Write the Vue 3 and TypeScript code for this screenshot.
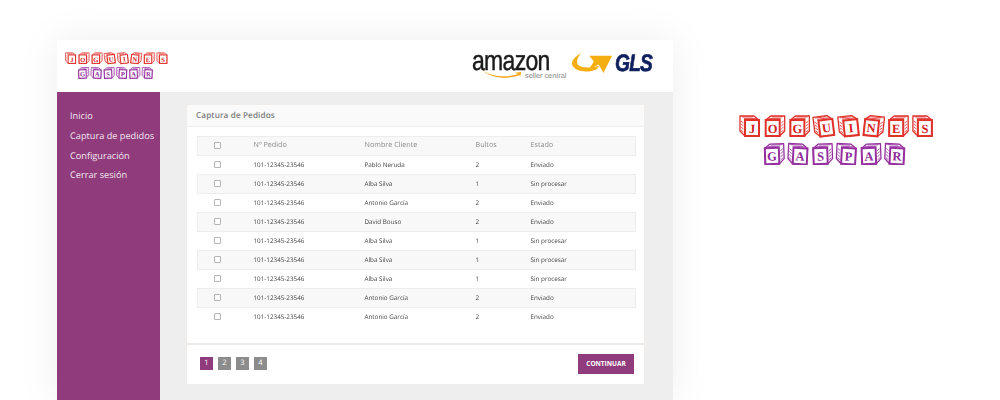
<template>
  <div class="page">
    <div class="window">
      <header class="topbar">
        <svg class="brand-small" viewBox="0 0 195 50" aria-label="Joguines Gaspar">
          <g v-for="b in blocks" :key="b.x + '-' + b.y" :transform="`translate(${b.x} ${b.y}) rotate(${b.r} 11 11)`" :class="b.y ? 'violet' : 'red'">
            <g :transform="b.flip ? 'matrix(-1 0 0 1 22 0)' : undefined">
              <path class="cube" d="M2 5 L7 1 H21 V16 L16 21 H2 Z" />
              <path class="hatch" d="M5 3.5 H17 M8 2 H19 M17.5 8 L20 6 M17.5 11 L20 9 M17.5 14 L20 12 M17.5 17 L20 15" />
              <rect class="face" x="2" y="5" width="14" height="16" />
            </g>
            <text :x="b.flip ? 13 : 9" y="17.5" text-anchor="middle">{{ b.l }}</text>
          </g>
        </svg>
        <div class="partners">
          <div class="amazon">
            <span class="amazon-word">amazon</span>
            <svg class="amazon-smile" viewBox="0 0 44 12" preserveAspectRatio="none">
              <path d="M1 1 C11 9 27 11 39 5 L40 7 C27 13 10 11 1 1 Z" fill="#f7a51c" />
              <path d="M35 3.5 L42 2.5 L41 9 C40.5 6.5 39 5 35 3.5 Z" fill="#f7a51c" />
            </svg>
            <span class="amazon-sub">seller central</span>
          </div>
          <div class="gls">
            <svg class="gls-arrow" viewBox="0 0 44 24">
              <path d="M11 1 C3 5 -1 11 2 15 C6 21 18 22 27 18 L30 14 C22 17 10 17 7 13 C5 9 8 4 11 1 Z" fill="#f5ae10" />
              <path d="M19 4 H43 L34 22 L29 13 L18 19 L24 10 Z" fill="#f5ae10" />
            </svg>
            <span class="gls-word">GLS</span>
          </div>
        </div>
      </header>
      <div class="body">
        <nav class="sidebar">
          <a v-for="item in menu" :key="item">{{ item }}</a>
        </nav>
        <main class="content">
          <section class="card">
            <h2 class="card-title">Captura de Pedidos</h2>
            <div class="card-body">
              <table>
                <thead>
                  <tr>
                    <th class="check"><span class="box"></span></th>
                    <th>Nº Pedido</th>
                    <th>Nombre Cliente</th>
                    <th>Bultos</th>
                    <th>Estado</th>
                  </tr>
                </thead>
                <tbody>
                  <tr v-for="(o, i) in orders" :key="i">
                    <td class="check"><span class="box"></span></td>
                    <td>101-12345-23546</td>
                    <td>{{ o.name }}</td>
                    <td>{{ o.count }}</td>
                    <td>{{ o.status }}</td>
                  </tr>
                </tbody>
              </table>
            </div>
            <footer class="card-footer">
              <div class="pages">
                <span v-for="p in 4" :key="p" class="page-num" :class="{ active: p === 1 }">{{ p }}</span>
              </div>
              <button class="next">CONTINUAR</button>
            </footer>
          </section>
        </main>
      </div>
    </div>
    <aside class="brand-side">
      <svg class="brand-large" viewBox="0 0 195 50" aria-label="Joguines Gaspar">
        <g v-for="b in blocks" :key="b.x + '-' + b.y" :transform="`translate(${b.x} ${b.y}) rotate(${b.r} 11 11)`" :class="b.y ? 'violet' : 'red'">
          <g :transform="b.flip ? 'matrix(-1 0 0 1 22 0)' : undefined">
            <path class="cube" d="M2 5 L7 1 H21 V16 L16 21 H2 Z" />
            <path class="hatch" d="M5 3.5 H17 M8 2 H19 M17.5 8 L20 6 M17.5 11 L20 9 M17.5 14 L20 12 M17.5 17 L20 15" />
            <rect class="face" x="2" y="5" width="14" height="16" />
          </g>
          <text :x="b.flip ? 13 : 9" y="17.5" text-anchor="middle">{{ b.l }}</text>
        </g>
      </svg>
    </aside>
  </div>
</template>

<script setup lang="ts">
interface Order {
  name: string
  count: number
  status: string
}

const menu = ['Inicio', 'Captura de pedidos', 'Configuración', 'Cerrar sesión']

const orders: Order[] = [
  { name: 'Pablo Neruda', count: 2, status: 'Enviado' },
  { name: 'Alba Silva', count: 1, status: 'Sin procesar' },
  { name: 'Antonio García', count: 2, status: 'Enviado' },
  { name: 'David Bouso', count: 2, status: 'Enviado' },
  { name: 'Alba Silva', count: 1, status: 'Sin procesar' },
  { name: 'Alba Silva', count: 1, status: 'Sin procesar' },
  { name: 'Alba Silva', count: 1, status: 'Sin procesar' },
  { name: 'Antonio García', count: 2, status: 'Enviado' },
  { name: 'Antonio García', count: 2, status: 'Enviado' },
]

// letter blocks of the logo, shared by the small and the large copy
const tilt = [0, 0, 0, -7, -6, 6, 0, 0]
const flipped = [true, false, false, true, true, false, false, true]
const blocks = [
  ...'JOGUINES'.split('').map((l, i) => ({ l, x: i * 24.7, y: 0, r: tilt[i], flip: flipped[i] })),
  ...'GASPAR'.split('').map((l, i) => ({ l, x: 24 + i * 24.2, y: 28, r: i % 2 ? 3 : -2, flip: i % 2 === 1 })),
]
</script>

<style>
html,
body {
  background: #fff;
}
</style>

<style scoped>
.page {
  width: 1000px;
  height: 400px;
  box-sizing: border-box;
  padding: 40px 0 0 57px;
  display: flex;
  overflow: hidden;
  font-family: 'Open Sans', sans-serif;
  text-rendering: geometricPrecision;
  background: #fff;
}

.window {
  width: 616px;
  height: 360px;
  flex: none;
  display: flex;
  flex-direction: column;
  background: #eee;
  box-shadow: 0 0 40px rgba(0, 0, 0, 0.07);
}

.topbar {
  height: 52px;
  flex: none;
  background: #fff;
  display: flex;
  align-items: flex-start;
  justify-content: space-between;
  padding: 12px 21px 0 8px;
  box-sizing: border-box;
}

.brand-small {
  width: 103px;
  height: 27px;
  flex: none;
}

.partners {
  display: flex;
  align-items: flex-start;
}

.amazon {
  position: relative;
  width: 94px;
  height: 28px;
}

.amazon-word {
  position: absolute;
  left: 0;
  top: 1px;
  font-family: 'Liberation Sans', sans-serif;
  font-size: 23px;
  line-height: 19px;
  letter-spacing: -0.7px;
  color: #1a1a1a;
  -webkit-text-stroke: 0.4px #1a1a1a;
  transform: scaleY(1.22);
  transform-origin: 0 17px;
}

.amazon-smile {
  position: absolute;
  left: 10px;
  top: 18px;
  width: 41px;
  height: 9px;
}

.amazon-sub {
  position: absolute;
  left: 53px;
  top: 20px;
  font-family: 'Liberation Sans', sans-serif;
  font-size: 7.3px;
  line-height: 8px;
  color: #8a8a8a;
  white-space: nowrap;
}

.gls {
  display: flex;
  align-items: flex-start;
  margin-left: 5px;
}

.gls-arrow {
  width: 42px;
  height: 23px;
  margin-right: 2px;
  flex: none;
}

.gls-word {
  width: 37px;
  font-family: 'Liberation Sans', sans-serif;
  font-weight: 700;
  font-style: italic;
  font-size: 24px;
  line-height: 24px;
  letter-spacing: -1px;
  color: #10205e;
  -webkit-text-stroke: 0.7px #10205e;
  transform: scaleX(0.8);
  transform-origin: 0 0;
}

.body {
  flex: 1;
  display: flex;
  min-height: 0;
}

.sidebar {
  width: 103px;
  flex: none;
  box-sizing: border-box;
  background: #8f3b7c;
  padding: 14px 0 0 13px;
  display: flex;
  flex-direction: column;
}

.sidebar a {
  font-size: 9.2px;
  line-height: 20px;
  height: 19.8px;
  color: #f3e6f0;
  white-space: nowrap;
}

.content {
  flex: 1;
  padding: 13px 29px 0 27px;
  min-width: 0;
}

.card {
  height: 279px;
  display: flex;
  flex-direction: column;
  background: #fff;
  box-shadow: 0 0 0 1px #f0ece9;
}

.card-title {
  margin: 0;
  height: 21px;
  flex: none;
  padding-left: 9px;
  background: #fafafa;
  border-bottom: 1px solid #f0f0f0;
  font-size: 8.2px;
  font-weight: 600;
  line-height: 21px;
  letter-spacing: 0.1px;
  color: #808080;
}

.card-body {
  flex: 1;
  padding: 9px 8px 0 10px;
}

table {
  width: 439px;
  border-collapse: collapse;
  table-layout: fixed;
  font-size: 6.3px;
  color: #444;
  /* keeps the tiny text neutral, no coloured fringes */
  filter: grayscale(1);
}

th,
td {
  height: 19px;
  padding: 0 0 2px;
  box-sizing: border-box;
  text-align: left;
}

th:nth-child(2),
td:nth-child(2) {
  width: 111px;
}

th:nth-child(3),
td:nth-child(3) {
  width: 111px;
}

th:nth-child(4),
td:nth-child(4) {
  width: 55px;
}

.check {
  width: 56px;
  padding-left: 16px;
}

thead tr {
  background: #f8f8f8;
  border: 1px solid #ededed;
}

th {
  font-weight: 400;
  font-size: 7.2px;
  color: #8c8c94;
}

tbody tr:nth-child(even) {
  background: #f8f8f8;
  border: 1px solid #ededed;
}

.box {
  display: block;
  box-sizing: border-box;
  width: 7px;
  height: 7px;
  background: #fff;
  border: 1px solid #b5b5b5;
  border-radius: 1px;
}

.card-footer {
  height: 41px;
  flex: none;
  box-sizing: border-box;
  border-top: 2px solid #efebe8;
  padding: 0 10px 2px 13px;
  display: flex;
  align-items: center;
  justify-content: space-between;
}

.pages {
  display: flex;
  gap: 5px;
}

.page-num {
  width: 13px;
  height: 13px;
  background: #8c8c8c;
  color: #fff;
  font-size: 7.5px;
  line-height: 13px;
  text-align: center;
}

.page-num.active {
  background: #8f3b7c;
}

.next {
  width: 56px;
  height: 20px;
  padding: 0;
  border: 0;
  background: #8f3b7c;
  color: #fff;
  font-family: 'Open Sans', sans-serif;
  font-size: 6.5px;
  font-weight: 700;
}

.brand-side {
  margin: 75px 0 0 66px;
}

.brand-large {
  display: block;
  width: 195px;
  height: 50px;
}

.cube {
  fill: #fff;
  stroke-width: 1.3;
  stroke-linejoin: round;
}

.hatch {
  fill: none;
  stroke-width: 0.8;
}

.face {
  fill: #fff;
  stroke-width: 2;
}

.red .cube,
.red .hatch,
.red .face {
  stroke: #e0312b;
}

.violet .cube,
.violet .hatch,
.violet .face {
  stroke: #96309f;
}

text {
  font-family: 'Liberation Serif', serif;
  font-weight: 700;
  font-size: 12.5px;
}

.red text {
  fill: #d4201c;
}

.violet text {
  fill: #8e2a9a;
}
</style>
